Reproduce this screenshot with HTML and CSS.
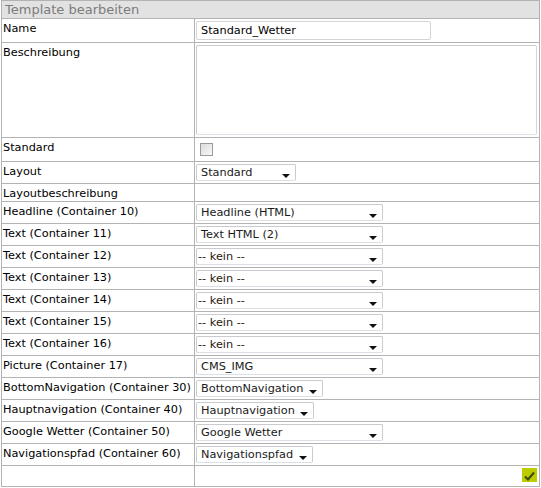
FILE: index.html
```html
<!DOCTYPE html>
<html lang="de">
<head>
<meta charset="utf-8">
<title>Template bearbeiten</title>
<link rel="stylesheet" href="styles.css">
</head>
<body>
<table class="form">
  <colgroup><col class="c1"><col class="c2"></colgroup>
  <tr><th colspan="2" class="head">Template bearbeiten</th></tr>
  <tr><td class="lbl">Name</td><td class="fld"><input class="txt" type="text" value="Standard_Wetter"></td></tr>
  <tr><td class="lbl">Beschreibung</td><td class="fld"><textarea class="area"></textarea></td></tr>
  <tr><td class="lbl">Standard</td><td class="fld"><input class="chk" type="checkbox"></td></tr>
  <tr><td class="lbl">Layout</td><td class="fld"><div class="sel w99">Standard</div></td></tr>
  <tr><td class="lbl">Layoutbeschreibung</td><td class="fld empty"></td></tr>
  <tr><td class="lbl">Headline (Container 10)</td><td class="fld"><div class="sel">Headline (HTML)</div></td></tr>
  <tr><td class="lbl">Text (Container 11)</td><td class="fld"><div class="sel">Text HTML (2)</div></td></tr>
  <tr><td class="lbl">Text (Container 12)</td><td class="fld"><div class="sel kein">-- kein --</div></td></tr>
  <tr><td class="lbl">Text (Container 13)</td><td class="fld"><div class="sel kein">-- kein --</div></td></tr>
  <tr><td class="lbl">Text (Container 14)</td><td class="fld"><div class="sel kein">-- kein --</div></td></tr>
  <tr><td class="lbl">Text (Container 15)</td><td class="fld"><div class="sel kein">-- kein --</div></td></tr>
  <tr><td class="lbl">Text (Container 16)</td><td class="fld"><div class="sel kein">-- kein --</div></td></tr>
  <tr><td class="lbl">Picture (Container 17)</td><td class="fld"><div class="sel">CMS_IMG</div></td></tr>
  <tr><td class="lbl">BottomNavigation (Container 30)</td><td class="fld"><div class="sel w126">BottomNavigation</div></td></tr>
  <tr><td class="lbl">Hauptnavigation (Container 40)</td><td class="fld"><div class="sel w117">Hauptnavigation</div></td></tr>
  <tr><td class="lbl">Google Wetter (Container 50)</td><td class="fld"><div class="sel">Google Wetter</div></td></tr>
  <tr><td class="lbl">Navigationspfad (Container 60)</td><td class="fld"><div class="sel w116">Navigationspfad</div></td></tr>
  <tr class="last"><td class="lbl"></td><td class="fld act"><button class="ok" type="button" aria-label="Speichern"><svg width="11" height="10" viewBox="0 0 11 10"><path d="M1 5.5 L4 8.5 L10 1.5" fill="none" stroke="#3d4a00" stroke-width="2"/></svg></button></td></tr>
</table>
</body>
</html>
```
FILE: styles.css
```css
html, body {
  margin: 0;
  padding: 0;
  background: #ffffff;
}
body {
  font-family: "DejaVu Sans", Verdana, sans-serif;
  font-size: 11.3px;
  color: #000;
}
.form {
  margin-left: 1px;
  border-collapse: collapse;
  table-layout: fixed;
  width: 538px;
  border: 1px solid #b3b3b3;
}
.c1 { width: 193px; }
.c2 { width: 345px; }
.head {
  background: #e2e2e2;
  color: #7c7c7c;
  font-weight: normal;
  font-size: 13px;
  text-align: left;
  height: 17px;
  padding: 0 0 0 3px;
  line-height: 17px;
  border: 0;
}
.form td {
  border: 1px solid #b3b3b3;
  vertical-align: top;
}
.lbl {
  padding: 2px 1px 0 1px;
  line-height: 15px;
  white-space: nowrap;
}
.fld {
  padding: 2px 1px 2px 1px;
}
.txt {
  display: block;
  box-sizing: border-box;
  width: 235px;
  height: 19px;
  margin: 0;
  padding: 0 0 0 4px;
  border: 1px solid #d2d4d7;
  border-radius: 2px;
  font: inherit;
  color: #000;
}
.area {
  display: block;
  box-sizing: border-box;
  width: 341px;
  height: 90px;
  margin: 0;
  padding: 0;
  border: 1px solid #c9cbce;
  border-bottom-color: #dde2e8;
  border-right-color: #d4d8dd;
  border-radius: 2px;
  resize: none;
}
.chk {
  display: block;
  appearance: none;
  -webkit-appearance: none;
  width: 13px;
  height: 13px;
  margin: 3px 0 3px 4px;
  box-sizing: border-box;
  border: 1px solid #9a9a9a;
  background: linear-gradient(135deg, #dcdcdc, #f8f8f8);
  border-radius: 0;
}
.sel {
  box-sizing: border-box;
  width: 187px;
  height: 17px;
  border: 1px solid #c9cbce;
  border-bottom-color: #dbe0e6;
  border-radius: 2px;
  padding: 0 0 0 4px;
  line-height: 15px;
  color: #1a1a1a;
  position: relative;
  background: #fff;
}
.sel::after {
  content: "";
  position: absolute;
  right: 5px;
  top: 9px;
  width: 0;
  height: 0;
  border-left: 4px solid transparent;
  border-right: 4px solid transparent;
  border-top: 4px solid #111;
}
.sel.kein { padding-left: 1px; color: #2a1a10; }
.w99 { width: 100px; }
.w126 { width: 127px; }
.w117 { width: 118px; }
.w116 { width: 117px; }
.empty { padding: 0; }
.act {
  text-align: right;
  padding: 2px 2px 3px 1px;
  height: 15px;
}
.ok {
  display: inline-block;
  width: 15px;
  height: 14px;
  margin: 0;
  padding: 0;
  border: 0;
  background: #bccc00;
  vertical-align: top;
}
.ok svg { display: block; margin: 2px auto 0; }
```
